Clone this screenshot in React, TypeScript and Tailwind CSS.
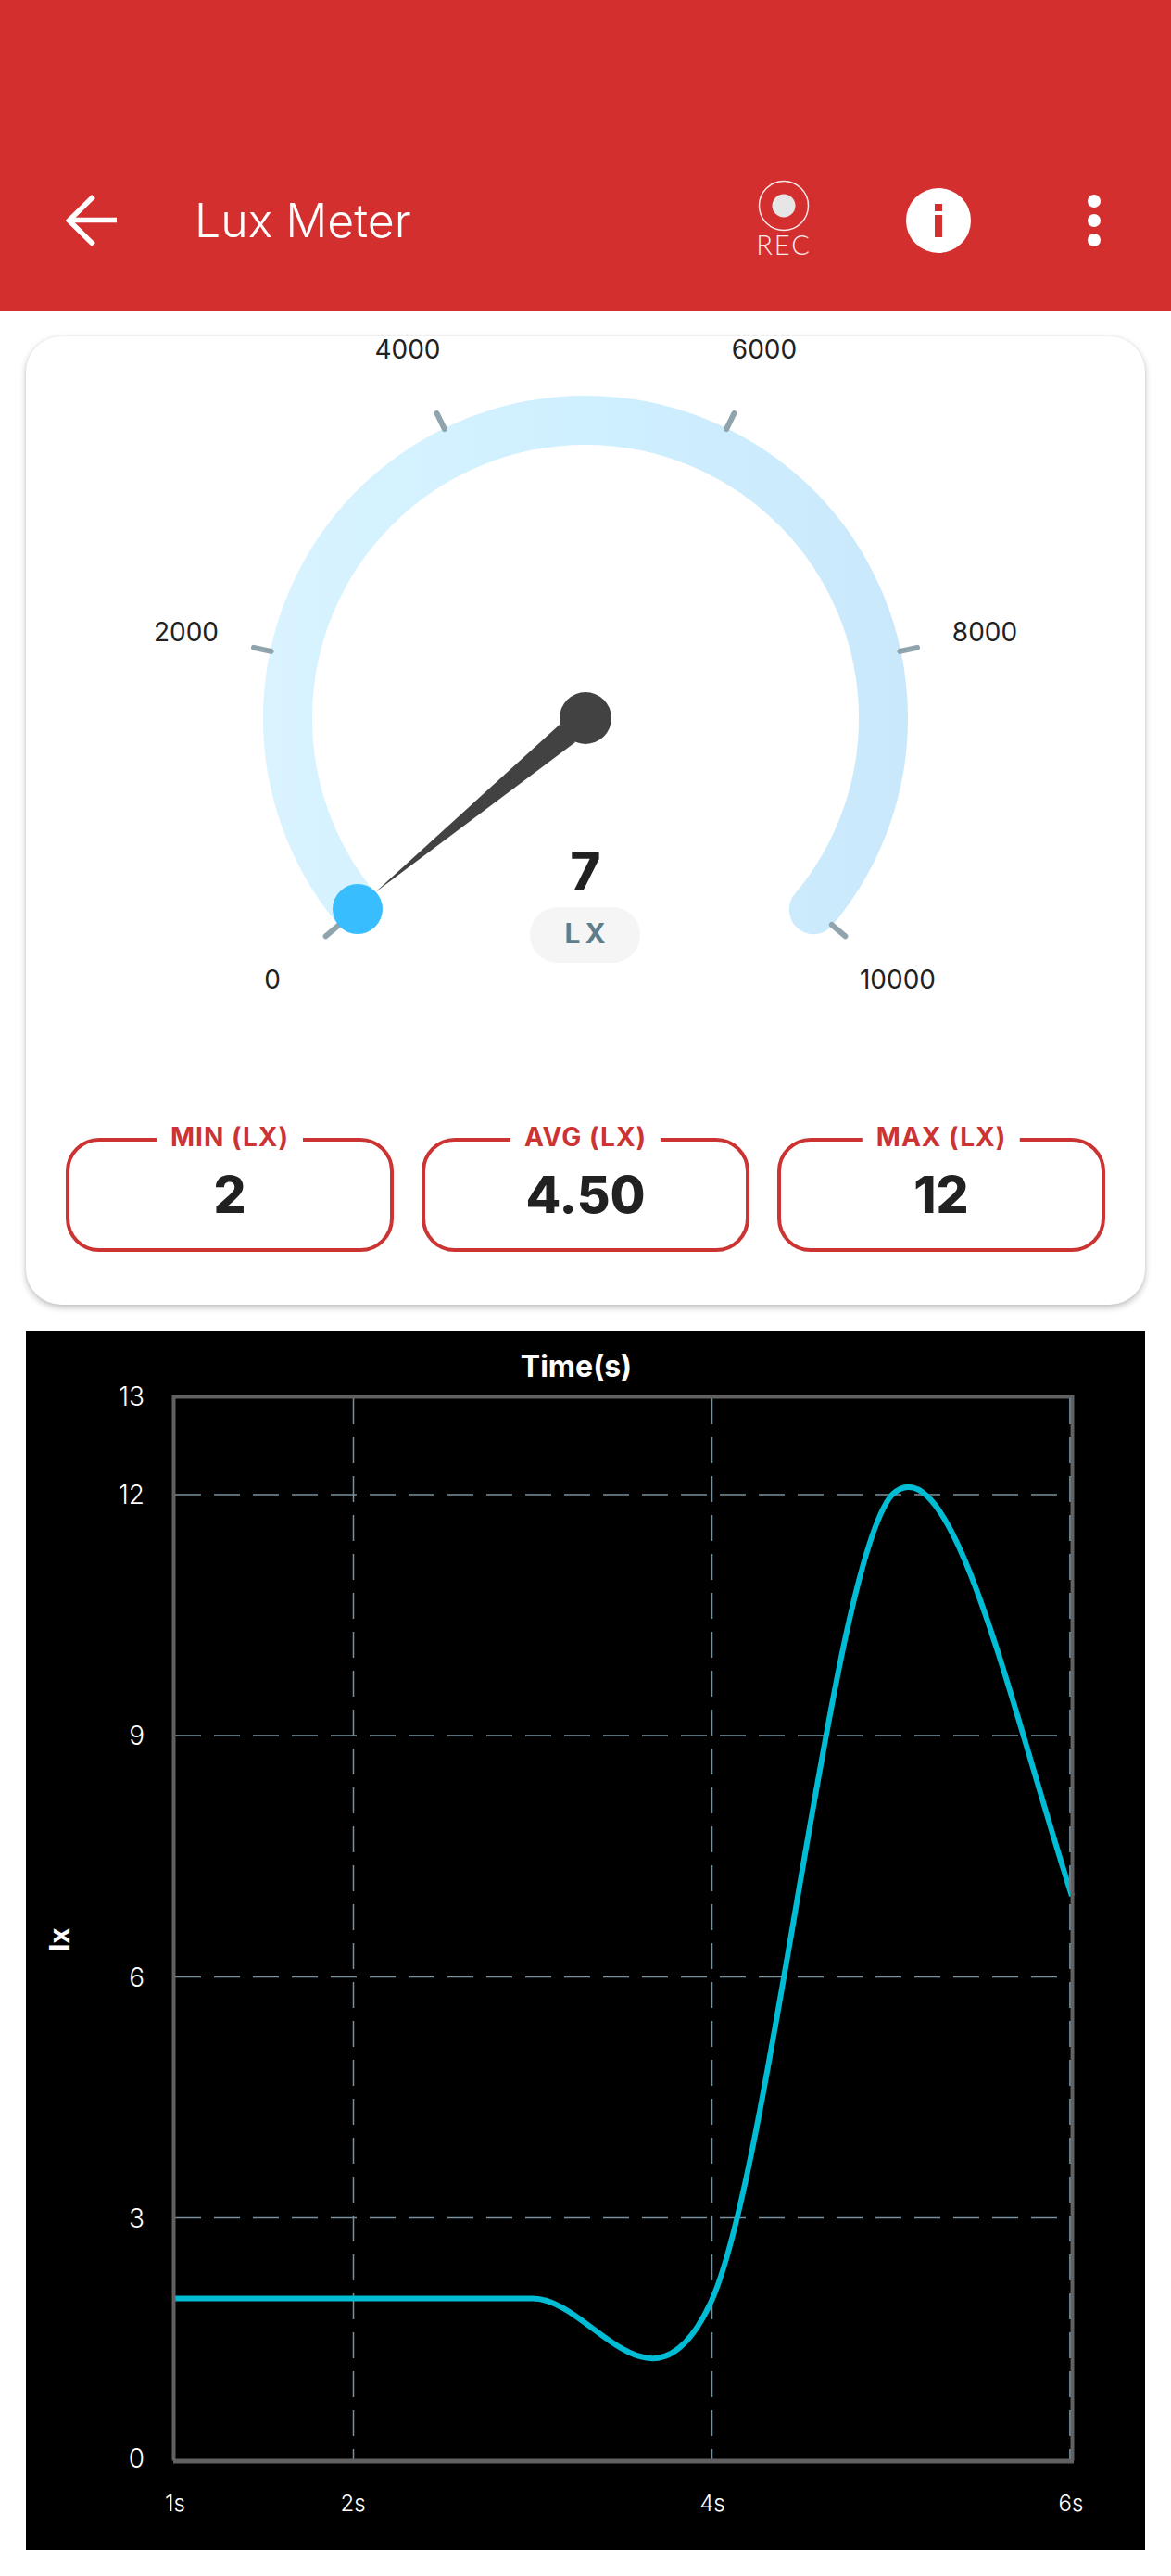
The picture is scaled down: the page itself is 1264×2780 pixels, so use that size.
const RED = '#D32F2F';

// gauge geometry, in page pixels
const CX = 632;
const CY = 775;
const ARC_R = 321.5;

const polar = (deg: number, r: number) => {
  const rad = (deg * Math.PI) / 180;
  return { x: CX + r * Math.cos(rad), y: CY - r * Math.sin(rad) };
};

const TICKS = [220, 168, 116, 64, 12, -40];

const GAUGE_LABELS = [
  { text: '0', x: 294, y: 1067 },
  { text: '2000', x: 201, y: 692 },
  { text: '4000', x: 440, y: 387 },
  { text: '6000', x: 825, y: 387 },
  { text: '8000', x: 1063, y: 692 },
  { text: '10000', x: 969, y: 1067 },
];

const STATS = [
  { label: 'MIN (LX)', value: '2' },
  { label: 'AVG (LX)', value: '4.50' },
  { label: 'MAX (LX)', value: '12' },
];

const Y_LINES = [
  { text: '12', y: 1613 },
  { text: '9', y: 1873 },
  { text: '6', y: 2133.5 },
  { text: '3', y: 2393.5 },
];
const X_LINES = [381.5, 768.5];

const Y_LABELS = [
  { text: '13', y: 1507 },
  { text: '12', y: 1613 },
  { text: '9', y: 1873 },
  { text: '6', y: 2133.5 },
  { text: '3', y: 2393.5 },
  { text: '0', y: 2653 },
];
const X_LABELS = [
  { text: '1s', x: 189 },
  { text: '2s', x: 381 },
  { text: '4s', x: 769 },
  { text: '6s', x: 1156 },
];

const CURVE =
  'M189 2480.5 L575 2480.5 C639.5 2480.5 704 2625 768.5 2482 C833 2335 898.5 1685 963 1613 C1027.5 1552 1092.5 1847 1157 2046';

function Gauge() {
  const start = polar(220, ARC_R);
  const end = polar(-40, ARC_R);
  return (
    <svg viewBox="28 363 1208 727" className="block w-full h-[727px] overflow-visible">
      <defs>
        <linearGradient id="arcFill" gradientUnits="userSpaceOnUse" x1="284" y1="0" x2="980" y2="0">
          <stop offset="0" stopColor="#d9f3ff" />
          <stop offset="0.5" stopColor="#cff0ff" />
          <stop offset="1" stopColor="#cae8fb" />
        </linearGradient>
      </defs>
      <path
        d={`M${start.x} ${start.y} A${ARC_R} ${ARC_R} 0 1 1 ${end.x} ${end.y}`}
        fill="none"
        stroke="url(#arcFill)"
        strokeWidth={53}
        strokeLinecap="round"
      />
      {TICKS.map((deg) => {
        const a = polar(deg, 347);
        const b = polar(deg, 366);
        return (
          <line key={deg} x1={a.x} y1={a.y} x2={b.x} y2={b.y} stroke="#90A4AE" strokeWidth={6} strokeLinecap="round" />
        );
      })}
      {GAUGE_LABELS.map((l) => (
        <text key={l.text} x={l.x} y={l.y} textAnchor="middle" className="fill-[#212121] text-[28px]">
          {l.text}
        </text>
      ))}
      {/* needle */}
      <polygon points="604,782 621,801 405,963" fill="#424242" />
      <circle cx={CX} cy={CY} r={28} fill="#424242" />
      <circle cx={386} cy={981} r={27} fill="#38BDFF" />
      <text x={632} y={960} textAnchor="middle" className="fill-[#212121] text-[56px] font-extrabold">
        7
      </text>
      <rect x={572} y={979} width={119} height={60} rx={30} fill="#F5F5F5" />
      <text x={634} y={1018} textAnchor="middle" className="fill-[#607D8B] text-[30px] font-bold tracking-[5px]">
        LX
      </text>
    </svg>
  );
}

function StatBox({ label, value }: { label: string; value: string }) {
  return (
    <div className="relative h-[123px] rounded-[36px] border-4 border-[#CC3333] flex items-center justify-center">
      <span className="absolute -top-[23px] left-1/2 -translate-x-1/2 bg-white px-[15px] text-[28px] leading-[36px] font-bold tracking-[1px] text-[#CC3333] whitespace-nowrap">
        {label}
      </span>
      <span className="text-[55px] leading-none font-extrabold text-[#212121]">{value}</span>
    </div>
  );
}

function Chart() {
  return (
    <svg viewBox="28 1436 1208 1316" className="block w-full h-[1316px]">
      {Y_LINES.map((l) => (
        <line key={l.text} x1={189} y1={l.y} x2={1155} y2={l.y} stroke="#78909C" strokeWidth={1.5} strokeDasharray="28 14" />
      ))}
      {X_LINES.map((x) => (
        <line key={x} x1={x} y1={1509} x2={x} y2={2654} stroke="#78909C" strokeWidth={1.5} strokeDasharray="28 14" />
      ))}
      <path d={CURVE} fill="none" stroke="#00BCD4" strokeWidth={6} />
      {/* frame */}
      <path d="M187.5 2655.5 V1507.5 H1157.5 V2655.5" fill="none" stroke="#616161" strokeWidth={4} />
      <line x1={187} y1={2656} x2={1159} y2={2656} stroke="#616161" strokeWidth={5} />
      <line x1={1155} y1={1509} x2={1155} y2={2654} stroke="#607D8B" strokeWidth={2} strokeDasharray="28 14" />
      {Y_LABELS.map((l) => (
        <text key={l.text} x={156} y={l.y + 10} textAnchor="end" className="fill-white text-[28px] font-light">
          {l.text}
        </text>
      ))}
      {X_LABELS.map((l) => (
        <text key={l.text} x={l.x} y={2710} textAnchor="middle" className="fill-white text-[24px] font-light">
          {l.text}
        </text>
      ))}
      <text x={622} y={1486} textAnchor="middle" className="fill-white text-[32px] font-bold">
        Time(s)
      </text>
      <text transform="translate(75 2093) rotate(-90)" textAnchor="middle" className="fill-white text-[30px] font-bold">
        lx
      </text>
    </svg>
  );
}

export default function App() {
  return (
    <div className="min-h-[2780px] bg-white font-['Inter',sans-serif]">
      {/* App bar */}
      <header className="h-[336px] pt-[140px] pl-[71px] pr-[77px] flex items-center" style={{ backgroundColor: RED }}>
        <svg viewBox="0 0 56 56" className="w-[56px] h-[56px] flex-none" fill="none" stroke="white" strokeWidth={5.5}>
          <path d="M30 2 L3.5 28 L30 54" />
          <path d="M3.5 27.5 H55" />
        </svg>
        <h1 className="ml-[83px] text-[50px] font-light leading-none text-white">Lux Meter</h1>
        <div className="ml-auto w-[80px] flex flex-col items-center mb-[4px] translate-x-[1px]">
          <svg viewBox="0 0 56 56" className="w-[56px] h-[56px]">
            <circle cx={28} cy={28} r={26.5} fill="none" stroke="#FBE9E9" strokeWidth={1.5} />
            <circle cx={28} cy={28} r={12.5} fill="#E6E6E6" />
          </svg>
          <span className="text-[29px] leading-[28px] font-light tracking-[2px] text-[#FBE9E9] font-['Lato',sans-serif]">REC</span>
        </div>
        <svg viewBox="0 0 70 70" className="ml-[92px] w-[70px] h-[70px] flex-none translate-x-[1px]">
          <circle cx={35} cy={35} r={35} fill="white" />
          <rect x={31} y={17} width={8} height={8} fill={RED} />
          <rect x={31} y={29} width={8} height={24} fill={RED} />
        </svg>
        <svg viewBox="0 0 14 56" className="ml-[126px] w-[14px] h-[56px] flex-none translate-x-[1px]">
          <circle cx={7} cy={7} r={7} fill="white" />
          <circle cx={7} cy={28} r={7} fill="white" />
          <circle cx={7} cy={49} r={7} fill="white" />
        </svg>
      </header>

      {/* Gauge card */}
      <section className="mx-[28px] mt-[27px] rounded-[38px] bg-white pb-[57px] shadow-[0_3px_7px_rgba(0,0,0,0.25),0_0_2px_rgba(0,0,0,0.08)]">
        <Gauge />
        <div className="mt-[138px] px-[43px] grid grid-cols-3 gap-[30px]">
          {STATS.map((s) => (
            <StatBox key={s.label} label={s.label} value={s.value} />
          ))}
        </div>
      </section>

      {/* Chart */}
      <section className="mx-[28px] mt-[28px] bg-black">
        <Chart />
      </section>
    </div>
  );
}
